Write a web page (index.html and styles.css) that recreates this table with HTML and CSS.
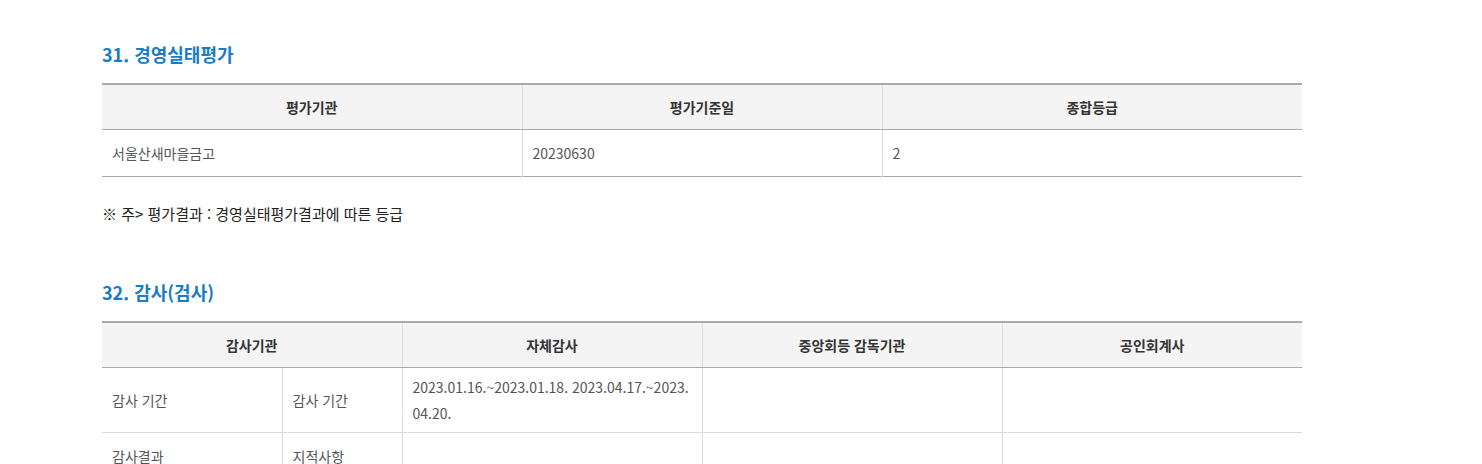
FILE: index.html
```html
<!DOCTYPE html>
<html lang="ko">
<head>
<meta charset="utf-8">
<title>경영실태평가 · 감사</title>
<link rel="stylesheet" href="styles.css">
</head>
<body>
<div class="wrap">
  <section class="sec">
    <h3 class="sec-title">31. 경영실태평가</h3>
    <table class="tbl">
      <colgroup><col class="c420"><col class="c360"><col class="c420"></colgroup>
      <thead>
        <tr><th>평가기관</th><th>평가기준일</th><th>종합등급</th></tr>
      </thead>
      <tbody>
        <tr><td>서울산새마을금고</td><td>20230630</td><td>2</td></tr>
      </tbody>
    </table>
    <p class="note">※ 주&gt; 평가결과 : 경영실태평가결과에 따른 등급</p>
  </section>
  <section class="sec sec2">
    <h3 class="sec-title">32. 감사(검사)</h3>
    <table class="tbl">
      <colgroup><col class="c180"><col class="c120"><col class="c300"><col class="c300"><col class="c300"></colgroup>
      <thead>
        <tr><th colspan="2">감사기관</th><th>자체감사</th><th>중앙회등 감독기관</th><th>공인회계사</th></tr>
      </thead>
      <tbody>
        <tr><td>감사 기간</td><td>감사 기간</td><td>2023.01.16.~2023.01.18. 2023.04.17.~2023.04.20.</td><td></td><td></td></tr>
        <tr><td>감사결과</td><td>지적사항</td><td></td><td></td><td></td></tr>
      </tbody>
    </table>
  </section>
</div>
</body>
</html>
```

FILE: styles.css
```css
html, body {
  margin: 0;
  padding: 0;
  background: #fff;
}
body {
  font-family: "Noto Sans CJK KR", "Noto Sans", sans-serif;
  font-size: 14px;
  color: #555;
}
.wrap {
  width: 1200px;
  margin-left: 102px;
  padding-top: 41px;
}
.sec-title {
  margin: 0 0 16px;
  font-size: 18px;
  line-height: 26px;
  font-weight: 700;
  color: #1a7cc4;
}
.sec2 {
  margin-top: 54px;
}
.tbl {
  width: 1200px;
  border-collapse: collapse;
  table-layout: fixed;
  border-top: 2px solid #aaa;
  border-bottom: 1px solid #aaa;
}
.c420 { width: 420px; }
.c360 { width: 360px; }
.c300 { width: 300px; }
.c180 { width: 180px; }
.c120 { width: 120px; }
.tbl th {
  background: #f4f4f4;
  color: #333;
  font-weight: 700;
  text-align: center;
  height: 44px;
  padding: 0 10px;
  line-height: 26px;
  border-bottom: 1px solid #aaa;
  border-left: 1px solid #ddd;
}
.tbl td {
  height: 47px;
  padding: 6px 10px;
  line-height: 26px;
  text-align: left;
  vertical-align: middle;
  border-top: 1px solid #ddd;
  border-left: 1px solid #ddd;
  word-break: break-all;
  box-sizing: border-box;
}
.tbl th:first-child,
.tbl td:first-child {
  border-left: 0;
}
.tbl thead + tbody tr:first-child td {
  border-top: 0;
}
.note {
  margin: 26px 0 0;
  font-size: 15px;
  line-height: 22px;
  color: #222;
}
```
